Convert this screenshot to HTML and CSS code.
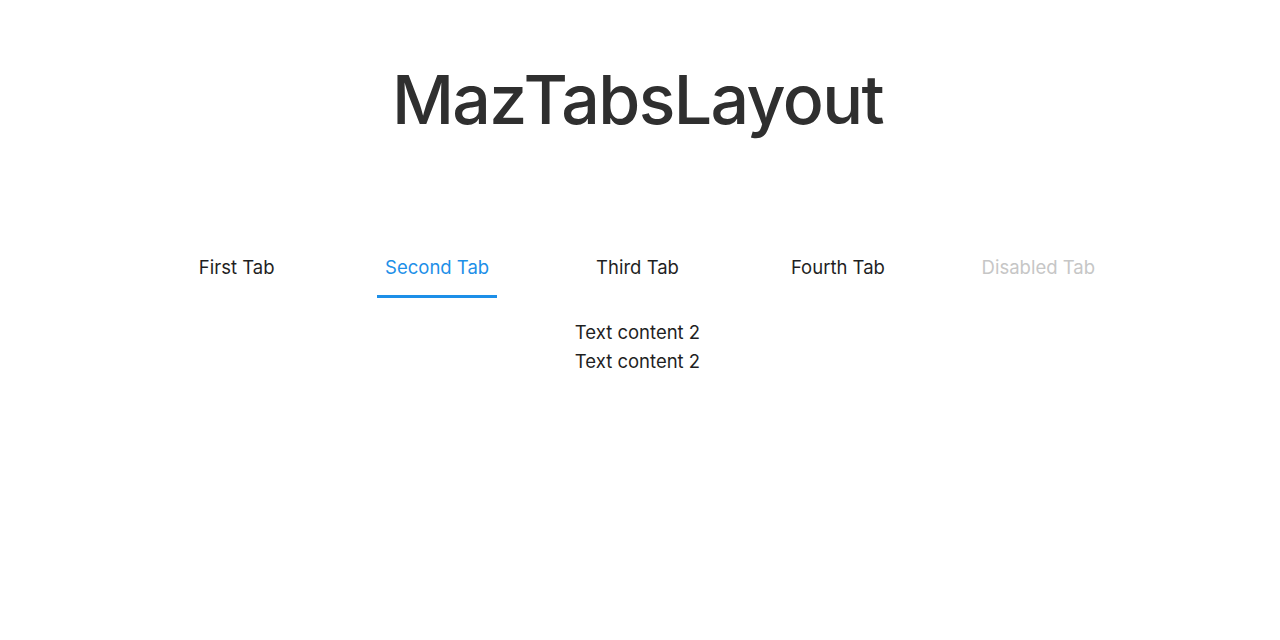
FILE: index.html
```html
<!DOCTYPE html>
<html>
<head>
<meta charset="utf-8">
<link rel="stylesheet" href="styles.css">
</head>
<body>
<main class="page">
  <h1 class="title">MazTabsLayout</h1>
  <div class="tabs">
    <nav class="tab-bar">
      <div class="tab"><span class="tab-btn">First Tab</span></div>
      <div class="tab"><span class="tab-btn active">Second Tab</span></div>
      <div class="tab"><span class="tab-btn">Third Tab</span></div>
      <div class="tab"><span class="tab-btn">Fourth Tab</span></div>
      <div class="tab"><span class="tab-btn disabled">Disabled Tab</span></div>
    </nav>
    <div class="content">
      <p>Text content 2</p>
      <p>Text content 2</p>
    </div>
  </div>
</main>
</body>
</html>
```
FILE: styles.css
```css
* { box-sizing: border-box; }
html, body { margin: 0; padding: 0; background: #fff; }
body { font-family: Inter, "Noto Sans", sans-serif; color: #1f1f1f; }
.page { display: flex; flex-direction: column; align-items: center; padding-top: 51px; padding-right: 5px; }
.title {
  margin: 0;
  font-family: Inter, sans-serif;
  font-weight: 500;
  font-size: 68px;
  line-height: 96px;
  color: #2f2f2f;
  letter-spacing: -1.6px;
}
.tabs { margin-top: 97px; width: 1002px; display: flex; flex-direction: column; align-items: center; }
.tab-bar { display: flex; width: 100%; }
.tab { flex: 1; display: flex; justify-content: center; }
.tab-btn {
  font-size: 18.5px;
  line-height: 26px;
  padding: 10px 8px 15px;
  border-bottom: 3px solid transparent;
  color: #1f1f1f;
}
.tab-btn.active { color: #1d8fe8; border-bottom-color: #1d8fe8; }
.tab-btn.disabled { color: #c6c6c6; }
.content { padding-top: 20px; text-align: center; }
.content p { margin: 0; font-size: 18.5px; line-height: 29px; color: #1f1f1f; }
```
